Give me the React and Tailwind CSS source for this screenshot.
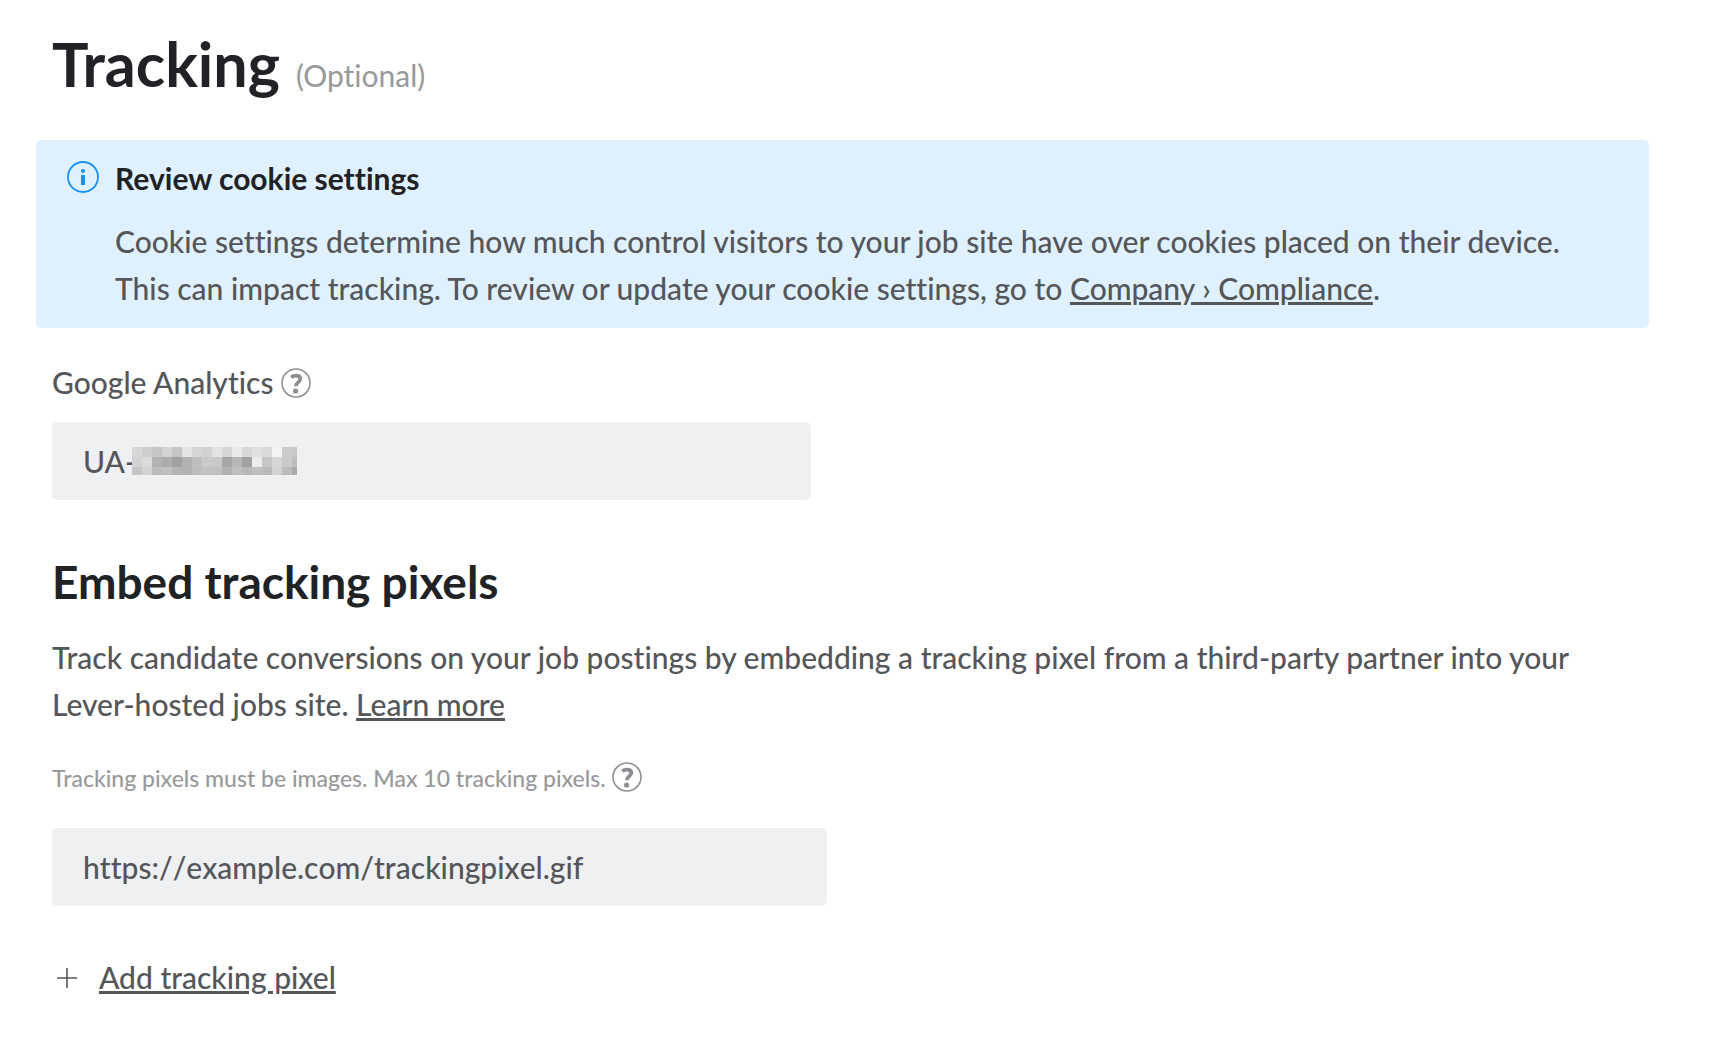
import React, { useState } from "react";

const REDACTED_ROWS = [
    ["#d6d7d8", "#cccdce", "#c4c5c6", "#d3d4d5", "#c3c4c5", "#e3e4e6", "#d4d5d6", "#d1d2d3", "#e1e2e4", "#d5d6d7", "#e8e9eb", "#d7d8d9", "#dfe0e2", "#d8d9db", "#f2f3f5", "#cacbcd", "#c6c7c9"],
    ["#d1d2d3", "#dadbdc", "#b2b3b4", "#acadae", "#a1a2a3", "#b0b1b2", "#bebfc0", "#cbcacb", "#c8c8c9", "#a6a7a8", "#b5b6b7", "#a0a1a2", "#ebecee", "#c6c7c8", "#d6d7d7", "#cacbcc", "#bcbdbe"],
    ["#c3c4c5", "#d2d3d4", "#bbbcbd", "#c0c0c1", "#b3b4b5", "#b1b2b3", "#bcbdbe", "#c2c2c3", "#c1c1c2", "#b0b1b2", "#bdbebf", "#b7b8b9", "#bebfc0", "#b9babb", "#d3d3d3", "#bcbcbd", "#a9aaab"],
];

function InfoIcon() {
    return (
        <svg className="w-8 h-8 shrink-0" viewBox="0 0 32 32" fill="none">
            <circle cx="16" cy="16" r="15" stroke="#1593f5" strokeWidth="1.8" />
            <circle cx="16" cy="10" r="2" fill="#1593f5" />
            <rect x="14" y="14" width="4" height="10" fill="#1593f5" />
        </svg>
    );
}

function HelpButton({ label }) {
    return (
        <button type="button" aria-label={label} className="shrink-0 cursor-pointer">
            <svg className="w-[30px] h-[30px]" viewBox="0 0 30 30" fill="none">
                <circle cx="15" cy="15" r="14" stroke="#8e8f92" strokeWidth="1.6" />
                <path
                    d="M10.2 9.4C11.6 8.2 13.2 7.7 15 7.7C17.8 7.7 19.3 9 19.3 11.1C19.3 14.2 14.8 14.2 14.8 18.2"
                    stroke="#8e8f92"
                    strokeWidth="3.8"
                />
                <circle cx="14.6" cy="23" r="2.6" fill="#8e8f92" />
            </svg>
        </button>
    );
}

function PlusIcon() {
    return (
        <svg className="w-5 h-5" viewBox="0 0 20 20" stroke="#55565a" strokeWidth="1.6">
            <path d="M10 0V20M0 10H20" />
        </svg>
    );
}

// Pixelated cover over the private part of the account id
function RedactedId() {
    return (
        <svg className="absolute left-20 top-[25px] w-[165px] h-7" viewBox="0 0 165 28" shapeRendering="crispEdges">
            {REDACTED_ROWS.map((row, y) =>
                row.map((color, x) => (
                    <rect key={`${x}-${y}`} x={x * 10} y={y * 10} width="10" height="10" fill={color} />
                ))
            )}
        </svg>
    );
}

function App() {
    const [analyticsId, setAnalyticsId] = useState("UA-");
    const [pixelUrl, setPixelUrl] = useState("https://example.com/trackingpixel.gif");

    return (
        <main className="min-h-screen bg-white pt-7 pb-16 pl-9 pr-[87px] font-['Lato',sans-serif] font-medium text-[30px] leading-[47px] text-[#55565a] [font-variant-ligatures:none]">
            <header className="flex items-baseline gap-4 px-4">
                <h1 className="text-[61px] leading-[72px] font-bold text-[#212226]">Tracking</h1>
                <span className="font-normal text-[#98999b]">(Optional)</span>
            </header>

            <section className="mt-10 flex gap-4 rounded-[5px] bg-[#dff1fe] pt-[15px] pb-4 pl-[31px] pr-16">
                <div className="pt-1.5">
                    <InfoIcon />
                </div>
                <div>
                    <h2 className="font-bold text-[#212226]">Review cookie settings</h2>
                    <p className="mt-4">
                        Cookie settings determine how much control visitors to your job site have over cookies placed on their device.
                        This can impact tracking. To review or update your cookie settings, go to{" "}
                        <a href="#compliance" className="underline">Company › Compliance</a>.
                    </p>
                </div>
            </section>

            <section className="mt-[31px] px-4">
                <div className="flex items-center gap-2">
                    <label htmlFor="analytics">Google Analytics</label>
                    <HelpButton label="About Google Analytics" />
                </div>
                <div className="relative mt-4 max-w-[759px]">
                    <input
                        id="analytics"
                        type="text"
                        value={analyticsId}
                        onChange={(e) => setAnalyticsId(e.target.value)}
                        className="block w-full h-[78px] rounded-[5px] bg-[#eff0f2] px-[31px] outline-none"
                    />
                    <RedactedId />
                </div>
            </section>

            <section className="mt-[54px] px-4">
                <h2 className="text-[46px] leading-[56px] font-bold text-[#212226]">Embed tracking pixels</h2>
                <p className="mt-6">
                    Track candidate conversions on your job postings by embedding a tracking pixel from a third-party partner into your
                    Lever-hosted jobs site. <a href="#learn-more" className="underline">Learn more</a>
                </p>
                <div className="mt-[23px] flex items-center gap-1.5">
                    <label htmlFor="pixel" className="pt-1 text-[23px] text-[#98999b]">
                        Tracking pixels must be images. Max 10 tracking pixels.
                    </label>
                    <HelpButton label="About tracking pixels" />
                </div>
                <input
                    id="pixel"
                    type="text"
                    value={pixelUrl}
                    onChange={(e) => setPixelUrl(e.target.value)}
                    className="mt-[26px] block w-full max-w-[775px] h-[78px] rounded-[5px] bg-[#eff0f2] px-[31px] outline-none [font-kerning:none]"
                />
                <button type="button" className="mt-12 flex items-center gap-[22px] pl-[5px] cursor-pointer">
                    <PlusIcon />
                    <span className="underline">Add tracking pixel</span>
                </button>
            </section>
        </main>
    );
}

export default App;
